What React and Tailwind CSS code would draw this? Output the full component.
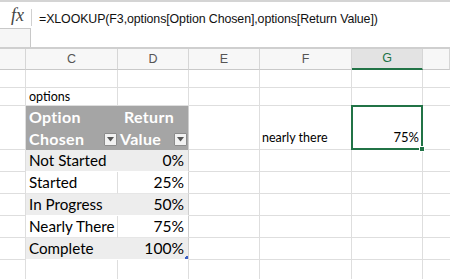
import React from 'react';

const font = { fontFamily: 'Lato, "Open Sans", sans-serif' };

function Dropdown() {
  return (
    <span className="inline-flex items-center justify-center w-[13px] h-[13px] bg-[#f2f2f2] border border-[#8c8c8c] rounded-[1px]">
      <svg width="7" height="5" viewBox="0 0 7 5">
        <path d="M0 0 L7 0 L3.5 4.5 Z" fill="#555" />
      </svg>
    </span>
  );
}

const rows = [
  ['Not Started', '0%'],
  ['Started', '25%'],
  ['In Progress', '50%'],
  ['Nearly There', '75%'],
  ['Complete', '100%'],
];

function Blank({ h, last }) {
  return <div className={`${h} border-b border-r border-[#dedede] ${last ? 'border-r-0' : ''}`} />;
}

function App() {
  const cols = ['', 'C', 'D', 'E', 'F', 'G', ''];
  return (
    <div className="w-[450px] h-[279px] overflow-hidden bg-white text-black" style={font}>
      {/* formula bar */}
      <div className="border-t-2 border-[#d4d4d4] h-[47px] flex">
        <div className="w-[31px] flex flex-col">
          <div className="h-[26px] flex items-center justify-end pr-[7px]">
            <span className="text-[18px] italic text-[#444]" style={{ fontFamily: '"Liberation Serif", serif' }}>fx</span>
          </div>
          <div className="flex-1 border-t border-r border-[#c8c8c8] bg-[#f6f6f6]" />
        </div>
        <div className="flex-1 flex items-start">
          <div className="w-px h-[17px] bg-[#d0d0d0] mt-[7px]" />
          <div className="pl-[7px] pt-[8px] text-[12.4px] leading-[18px] text-[#111] tracking-[-0.1px]" style={{ fontFamily: '"Liberation Sans", Arial, sans-serif' }}>
            =XLOOKUP(F3,options[Option Chosen],options[Return Value])
          </div>
        </div>
      </div>
      <div className="h-[2px] border-t border-b border-[#cfcfcf] bg-white" />

      {/* sheet grid */}
      <div className="grid grid-cols-[26px_92px_71px_71px_92px_71px_1fr] grid-rows-[21px_18px_18px_44px_22px_22px_22px_22px_22px_22px]">
        {cols.map((c, i) => (
          <div
            key={'h' + i}
            className={`flex items-center justify-center text-[12.5px] border-r border-[#d6d6d6] ${
              c === 'G'
                ? 'text-[#217346] bg-[#e3e3e3] border-b-2 border-b-[#217346]'
                : 'text-[#555] bg-[#f7f7f7] border-b border-b-[#c9c9c9]'
            }`}
            style={{ fontFamily: '"Liberation Sans", Arial, sans-serif' }}
          >
            {c}
          </div>
        ))}

        {/* row 1 */}
        {[0, 1, 2, 3, 4, 5, 6].map((i) => (
          <Blank key={'r1' + i} h="h-[18px]" last={i === 6} />
        ))}

        {/* row 2 */}
        <Blank h="h-[18px]" />
        <div className="border-b border-r border-[#dedede] text-[12.5px] leading-[17px] pl-[3px] flex items-end">options</div>
        {[2, 3, 4, 5, 6].map((i) => (
          <Blank key={'r2' + i} h="h-[18px]" last={i === 6} />
        ))}

        {/* row 3: table header */}
        <Blank h="h-[44px]" />
        <div className="bg-[#a5a5a5] text-white font-bold text-[16px] tracking-[0.3px] leading-[22px] pl-[3px] pr-[1px] flex flex-col">
          <span>Option</span>
          <span className="flex items-center justify-between">
            Chosen
            <Dropdown />
          </span>
        </div>
        <div className="bg-[#a5a5a5] text-white font-bold text-[16px] tracking-[0.3px] leading-[22px] pl-[2px] pr-[1px] flex flex-col border-r border-[#cfcfcf]">
          <span className="pl-[4px]">Return</span>
          <span className="flex items-center justify-between">
            Value
            <Dropdown />
          </span>
        </div>
        <Blank h="h-[44px]" />
        <div className="border-b border-r border-[#dedede] text-[12.5px] leading-[20px] pl-[2px] flex items-end pb-[1px]">nearly there</div>
        <div className="relative border-2 border-[#217346] text-[13px] flex items-end justify-end pr-[2px] pb-[1px] -ml-px -mt-px">
          75%
          <span className="absolute -right-[4px] -bottom-[4px] w-[6px] h-[6px] bg-[#217346] border border-white" />
        </div>
        <Blank h="h-[44px]" last />

        {/* table body */}
        {rows.map(([a, b], r) => {
          const band = r % 2 === 0;
          return (
            <React.Fragment key={a}>
              <Blank h="h-[22px]" />
              <div
                className={`text-[15.2px] leading-[21px] pl-[3px] whitespace-nowrap border-b ${
                  band ? 'bg-[#ededed] border-white' : 'bg-white border-r border-[#dedede] border-b-[#e6e6e6]'
                }`}
              >
                {a}
              </div>
              <div
                className={`relative text-[15.6px] leading-[21px] text-right pr-[4px] border-b border-r border-r-[#cfcfcf] ${
                  band ? 'bg-[#ededed] border-b-white' : 'bg-white border-b-[#e6e6e6]'
                }`}
              >
                {b}
                {r === 4 && (
                  <span className="absolute right-0 bottom-0 w-[3px] h-[3px] border-r-2 border-b-2 border-[#3b5fc4]" />
                )}
              </div>
              {[3, 4, 5, 6].map((i) => (
                <Blank key={a + i} h="h-[22px]" last={i === 6} />
              ))}
            </React.Fragment>
          );
        })}

        {/* trailing row */}
        {[0, 1, 2, 3, 4, 5, 6].map((i) => (
          <Blank key={'rl' + i} h="h-[22px]" last={i === 6} />
        ))}
      </div>
    </div>
  );
}

export default App;
